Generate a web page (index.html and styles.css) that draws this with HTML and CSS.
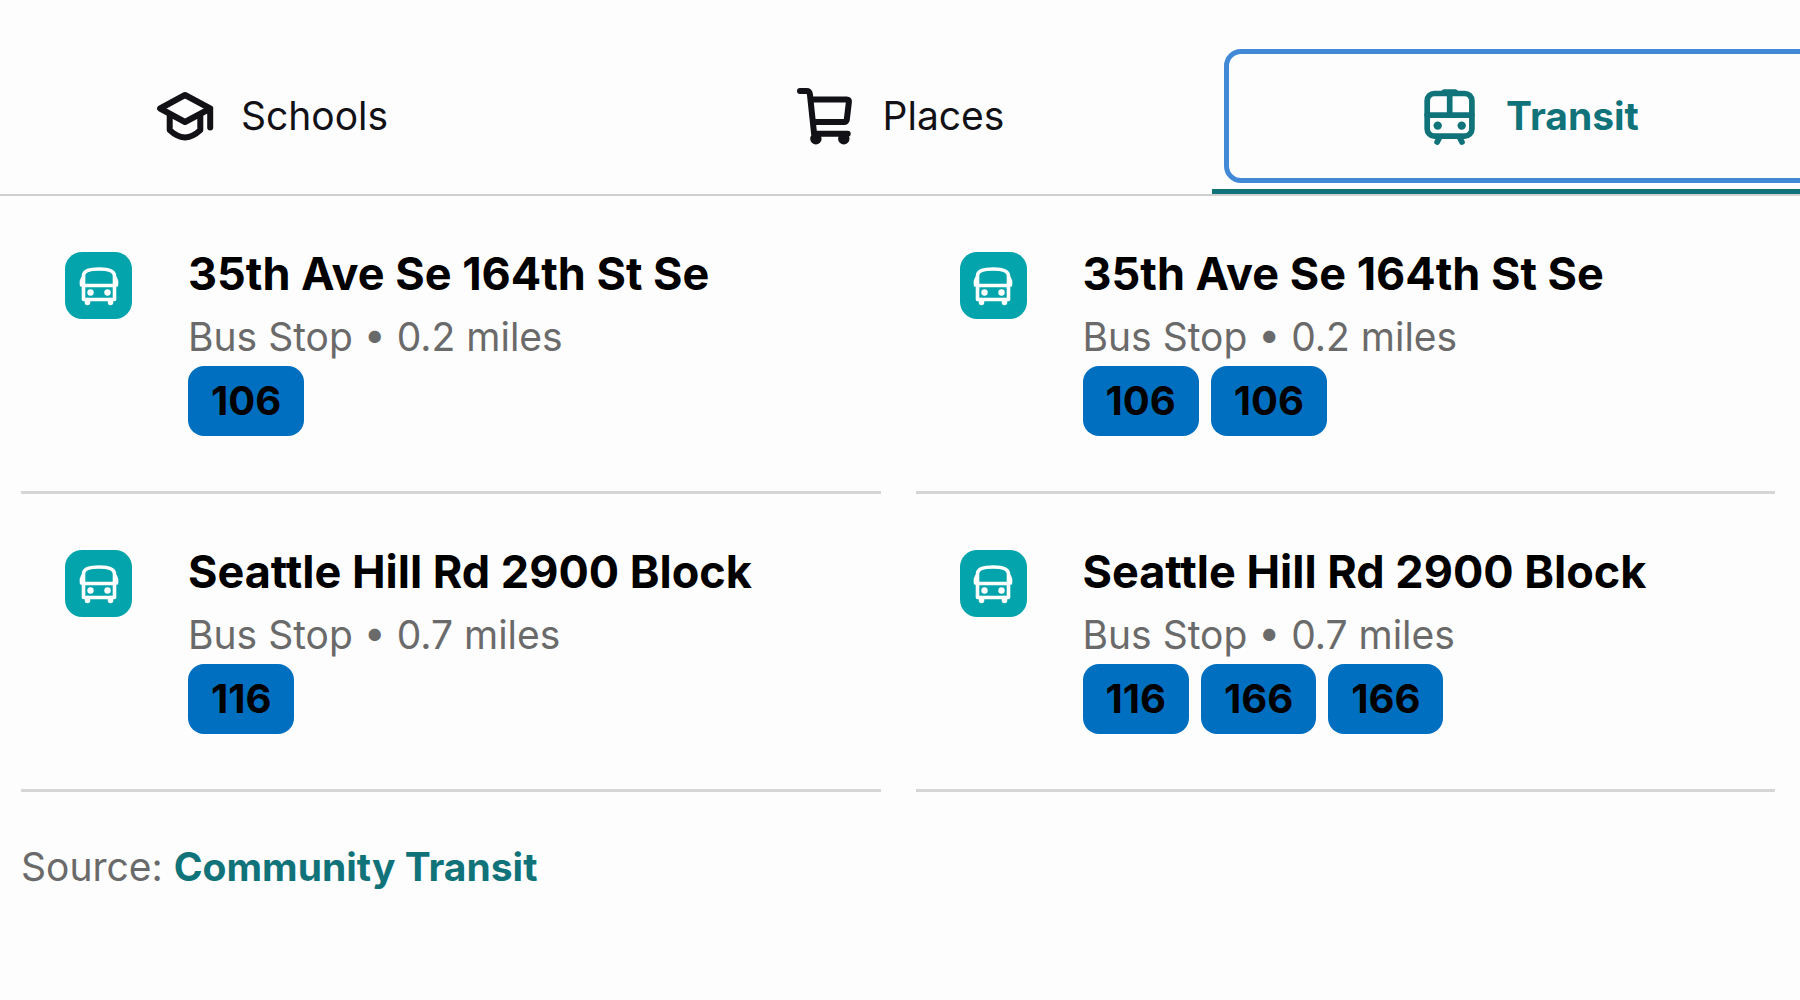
FILE: index.html
```html
<!DOCTYPE html>
<html lang="en">
<head>
    <meta charset="UTF-8">
    <meta name="viewport" content="width=device-width, initial-scale=1.0">
    <title>Transit</title>
    <link rel="stylesheet" href="styles.css">
</head>
<body>

    <svg class="sprite" aria-hidden="true">
        <symbol id="bus" viewBox="0 0 40 40">
            <path d="M3.500 12.500C2.500 14 2.200 17 2.500 19M36.500 12.500C37.500 14 37.800 17 37.500 19" fill="none" stroke="#fff" stroke-width="3.600" stroke-linecap="round"/>
            <path d="M4.500 19.500V10C4.500 4.500 11 3 20 3s15.500 1.500 15.500 7v23.500h-31zM3.500 19.500h33" fill="none" stroke="#fff" stroke-width="3.600" stroke-linejoin="round"/>
            <path d="M8.500 34.500v2M31.500 34.500v2" stroke="#fff" stroke-width="5.500" stroke-linecap="round"/>
            <circle cx="11.500" cy="26.500" r="3.200" fill="#fff"/>
            <circle cx="28.500" cy="26.500" r="3.200" fill="#fff"/>
        </symbol>
    </svg>

    <nav class="tabs" role="tablist">
        <button class="tab" role="tab">
            <span class="tab-label">
                <svg class="tab-icon" viewBox="0 0 24 24" fill="none" stroke="currentColor" stroke-width="2" stroke-linejoin="round" stroke-linecap="round">
                    <path d="M3.700 9.500 12 5l8.400 4.500L12 14zM20.400 9.500v6.300M6.900 11.600v5.100c1.600 1.500 3.200 2.300 5.100 2.500 1.900-.2 3.500-1 5.100-2.500v-5.100"/>
                </svg>
                Schools
            </span>
        </button>
        <button class="tab" role="tab">
            <span class="tab-label">
                <svg class="tab-icon" viewBox="0 0 24 24" fill="none" stroke="currentColor" stroke-width="2" stroke-linejoin="round" stroke-linecap="round">
                    <path d="M3 3.700h2.200c.7 0 1 .3 1.100 1l1.400 13.200h11.200M6.600 6.500h12c.5 0 .8.300.7.800l-.7 5.900c-.1.500-.4.800-.9.800H7.400"/>
                    <circle cx="8.300" cy="19.600" r="1.900" fill="currentColor" stroke="none"/>
                    <circle cx="17.600" cy="19.600" r="1.900" fill="currentColor" stroke="none"/>
                </svg>
                Places
            </span>
        </button>
        <button class="tab active" role="tab" aria-selected="true">
            <span class="tab-label">
                <svg class="tab-icon" viewBox="0 0 24 24" fill="none" stroke="currentColor" stroke-width="1.9" stroke-linecap="round">
                    <rect x="4.400" y="4.500" width="14.900" height="14.200" rx="2.400"/>
                    <path d="M4.400 11.700h14.900M11.900 4.500v7.200M10.100 4h3.600M8.400 19.400l-.7 1.300M15.300 19.400l.7 1.300"/>
                    <circle cx="7.900" cy="15.200" r="1.400" fill="currentColor" stroke="none"/>
                    <circle cx="15.900" cy="15.200" r="1.400" fill="currentColor" stroke="none"/>
                </svg>
                Transit
            </span>
        </button>
    </nav>

    <main>
        <ul class="stops">
            <li class="stop">
                <div class="stop-icon"><svg viewBox="0 0 40 40"><use href="#bus"/></svg></div>
                <div>
                    <h2>35th Ave Se 164th St Se</h2>
                    <p>Bus Stop • 0.2 miles</p>
                    <div class="routes"><span class="route">106</span></div>
                </div>
            </li>
            <li class="stop">
                <div class="stop-icon"><svg viewBox="0 0 40 40"><use href="#bus"/></svg></div>
                <div>
                    <h2>35th Ave Se 164th St Se</h2>
                    <p>Bus Stop • 0.2 miles</p>
                    <div class="routes"><span class="route">106</span><span class="route">106</span></div>
                </div>
            </li>
            <li class="stop">
                <div class="stop-icon"><svg viewBox="0 0 40 40"><use href="#bus"/></svg></div>
                <div>
                    <h2>Seattle Hill Rd 2900 Block</h2>
                    <p>Bus Stop • 0.7 miles</p>
                    <div class="routes"><span class="route">116</span></div>
                </div>
            </li>
            <li class="stop">
                <div class="stop-icon"><svg viewBox="0 0 40 40"><use href="#bus"/></svg></div>
                <div>
                    <h2>Seattle Hill Rd 2900 Block</h2>
                    <p>Bus Stop • 0.7 miles</p>
                    <div class="routes"><span class="route">116</span><span class="route">166</span><span class="route">166</span></div>
                </div>
            </li>
        </ul>

        <p class="source">Source: <a href="#">Community Transit</a></p>
    </main>

</body>
</html>
```
FILE: styles.css
```css
* {
    box-sizing: border-box;
}

body {
    margin: 0;
    padding-top: 37px;
    font-family: Inter, sans-serif;
    font-size: 39px;
    line-height: 60px;
    color: #6a6a6a;
    background: #fdfdfd;
    overflow-x: hidden;
}

.sprite {
    display: none;
}

/* the tab strip is wider than the page on both sides */
.tabs {
    display: flex;
    margin: 0 -41px 0 -46px;
    border-bottom: 2px solid #d0d0d2;
}

.tab {
    flex: 1;
    height: 157px;
    padding: 12px 12px 6px;
    border: 0;
    border-bottom: 5px solid transparent;
    background: none;
    font: inherit;
    color: #111116;
    cursor: pointer;
}

.tab-label {
    display: flex;
    align-items: center;
    justify-content: center;
    gap: 20px;
    height: 100%;
    border: 5px solid transparent;
    border-radius: 17px;
}

.tab-icon {
    width: 72px;
    height: 72px;
}

.tab.active {
    border-bottom-color: #10737a;
    font-weight: 700;
    color: #10737a;
}

.tab.active .tab-label {
    border-color: #4189d7;
}

main {
    padding: 0 25px 0 21px;
}

.stops {
    display: grid;
    grid-template-columns: 1fr 1fr;
    column-gap: 35px;
    margin: 0;
    padding: 0;
    list-style: none;
}

.stop {
    display: flex;
    gap: 56px;
    padding: 44px 0 55px 44px;
    border-bottom: 3px solid #d6d6d8;
}

.stop-icon {
    display: flex;
    align-items: center;
    justify-content: center;
    width: 67px;
    height: 67px;
    margin-top: 12px;
    border-radius: 17px;
    background: #04a4ad;
}

.stop-icon svg {
    width: 40px;
    height: 40px;
}

h2 {
    margin: 0;
    font-size: 45px;
    font-weight: 700;
    line-height: 68px;
    color: #000;
}

p {
    margin: 0;
    line-height: 58px;
}

.routes {
    display: flex;
    gap: 12px;
}

.route {
    padding: 0 23px;
    border-radius: 16px;
    background: #006fc0;
    font-size: 40px;
    font-weight: 700;
    line-height: 70px;
    color: #000;
}

.source {
    margin-top: 46px;
}

.source a {
    font-weight: 700;
    color: #10737a;
    text-decoration: none;
}
```
